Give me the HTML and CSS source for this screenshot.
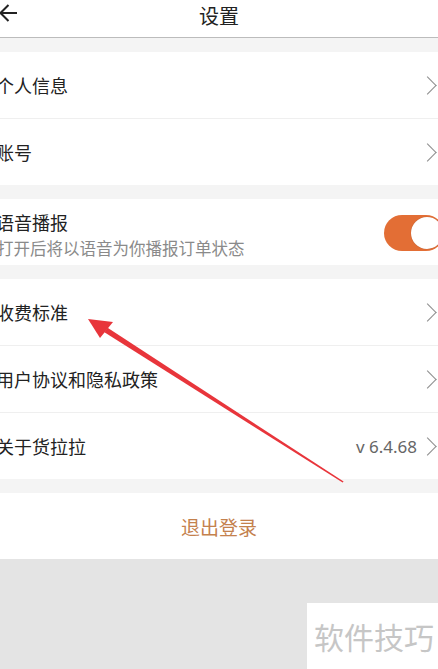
FILE: index.html
```html
<!DOCTYPE html>
<html lang="zh-CN">
<head>
<meta charset="utf-8">
<title>设置</title>
<link rel="stylesheet" href="styles.css">
</head>
<body>
<div class="page">
  <header class="topbar">
    <svg class="back" width="20" height="24" viewBox="0 0 20 24"><path d="M18 12H1.5M9.5 4L1.5 12L9.5 20" fill="none" stroke="#222" stroke-width="2"/></svg>
    <div class="title">设置</div>
  </header>

  <section class="group">
    <div class="row"><span class="label">个人信息</span><span class="chev"></span></div>
    <div class="row"><span class="label">账号</span><span class="chev"></span></div>
  </section>

  <section class="group">
    <div class="row">
      <div class="textblock">
        <div class="label">语音播报</div>
        <div class="sub">打开后将以语音为你播报订单状态</div>
      </div>
      <div class="toggle"><span class="knob"></span></div>
    </div>
  </section>

  <section class="group">
    <div class="row"><span class="label">收费标准</span><span class="chev"></span></div>
    <div class="row"><span class="label">用户协议和隐私政策</span><span class="chev"></span></div>
    <div class="row"><span class="label">关于货拉拉</span><span class="right"><span class="version">v 6.4.68</span><span class="chev"></span></span></div>
  </section>

  <section class="group">
    <div class="row logout">退出登录</div>
  </section>

  <div class="filler"></div>

  <div class="watermark">软件技巧</div>

  <svg class="annot" width="438" height="669" viewBox="0 0 438 669">
    <polygon points="104.4,332.3 107.6,327.7 343.6,481.6 342.6,482.6" fill="#e8353b"/>
    <polygon points="88,319 113,322 100,338" fill="#e8353b"/>
  </svg>
</div>
</body>
</html>
```

FILE: styles.css
```css
html, body {
  margin: 0;
  padding: 0;
}
body {
  width: 438px;
  height: 669px;
  overflow: hidden;
  background: #e4e4e4;
  font-family: "Noto Sans CJK SC", "Noto Sans", sans-serif;
  color: #222;
}
.page {
  position: relative;
  width: 438px;
  height: 669px;
  display: flex;
  flex-direction: column;
  background: #f4f4f4;
}
.topbar {
  height: 37px;
  background: #fff;
  border-bottom: 1px solid #bcbcbc;
  display: flex;
  align-items: center;
  justify-content: center;
  position: relative;
  flex: none;
}
.back {
  position: absolute;
  left: -1px;
  top: 1px;
}
.title {
  font-size: 20px;
  line-height: 28px;
  color: #222;
  margin-top: -6px;
}
.group {
  margin-top: 14px;
  background: #fff;
  flex: none;
}
.row {
  height: 66px;
  display: flex;
  align-items: center;
  justify-content: space-between;
  border-top: 1px solid #efefef;
}
.row:first-child {
  border-top: none;
}
.label {
  font-size: 18px;
  line-height: 24px;
  margin-left: -4px;
  color: #222;
}
.textblock {
  display: flex;
  flex-direction: column;
  padding-top: 4px;
}
.sub {
  font-size: 16.5px;
  line-height: 22px;
  color: #8a8a8a;
  margin-left: -3px;
  margin-top: 3px;
}
.right {
  display: flex;
  align-items: center;
}
.version {
  font-size: 17px;
  color: #666;
  margin-right: 4px;
  font-family: "Noto Sans", "Liberation Sans", sans-serif;
}
.chev {
  width: 12px;
  height: 12px;
  border-top: 1.5px solid #8c8c8c;
  border-right: 1.5px solid #8c8c8c;
  transform: rotate(45deg);
  margin-right: 4px;
  flex: none;
}
.toggle {
  width: 60px;
  height: 36px;
  border-radius: 18px;
  background: #e36e35;
  margin-right: -6px;
  margin-top: 2px;
  position: relative;
  flex: none;
}
.knob {
  position: absolute;
  left: 27px;
  top: 2px;
  width: 32px;
  height: 32px;
  border-radius: 50%;
  background: #fff;
  box-shadow: 0 0 1px rgba(0,0,0,0.3);
}
.logout {
  justify-content: center;
  font-size: 19px;
  color: #c4814d;
}
.filler {
  flex: 1;
  background: #e4e4e4;
}
.watermark {
  position: absolute;
  right: 0;
  bottom: 0;
  width: 131px;
  height: 66px;
  background: #fff;
  color: #c6c6c6;
  font-size: 30px;
  line-height: 66px;
  text-align: right;
  padding-right: 4px;
  box-sizing: border-box;
}
.annot {
  position: absolute;
  left: 0;
  top: 0;
  pointer-events: none;
}
```
